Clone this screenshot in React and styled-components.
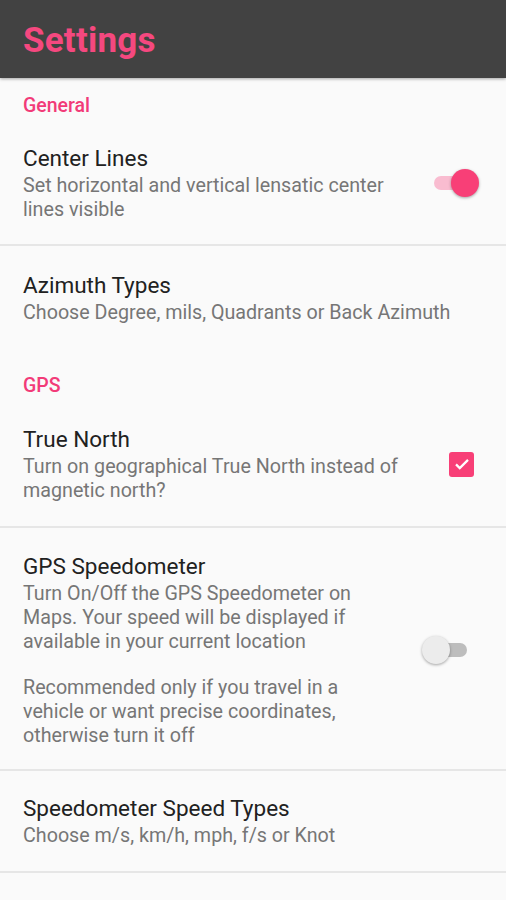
import React from "react";
import styled, { createGlobalStyle } from "styled-components";

const Global = createGlobalStyle`
  html, body { margin: 0; padding: 0; background: #fafafa; }
  body { font-family: Roboto, "Noto Sans", sans-serif; }
`;

const Page = styled.div`
  width: 506px;
  min-height: 900px;
  background: #fafafa;
  overflow: hidden;
`;

const AppBar = styled.header`
  height: 78px;
  box-sizing: border-box;
  padding: 3px 0 0 23px;
  background: #424242;
  display: flex;
  align-items: center;
  box-shadow: 0 1px 3px rgba(0, 0, 0, 0.35);
  position: relative;
  z-index: 1;
`;

const Title = styled.h1`
  margin: 0;
  color: #f5487f;
  font-size: 35px;
  font-weight: 700;
  letter-spacing: 0.2px;
`;

const Category = styled.div`
  color: #f23b78;
  font-size: 19.5px;
  line-height: 24px;
  font-weight: 500;
  padding: ${(p) => p.$pt} 23px 0;
`;

const Row = styled.div`
  display: flex;
  align-items: center;
  padding: ${(p) => p.$pt} 23px ${(p) => p.$pb};
  border-bottom: ${(p) => (p.$divider ? "2px solid #e6e6e6" : "none")};
`;

const Texts = styled.div`
  flex: 1;
  min-width: 0;
`;

const ItemTitle = styled.div`
  color: #212121;
  font-size: 22.5px;
  line-height: 28px;
  margin-bottom: 2px;
`;

const Summary = styled.div`
  color: #767676;
  font-size: 19.7px;
  line-height: 24px;
  max-width: ${(p) => p.$max || "none"};
  & + & {
    margin-top: 22px;
  }
`;

const Widget = styled.div`
  display: flex;
  justify-content: flex-end;
  flex-shrink: 0;
  padding-right: ${(p) => p.$pr};
`;

const SwitchTrack = styled.div`
  position: relative;
  width: 36px;
  height: 14px;
  border-radius: 7px;
  background: ${(p) => (p.$on ? "#f9bcd0" : "#bdbdbd")};
`;

const SwitchThumb = styled.div`
  position: absolute;
  top: -7px;
  left: ${(p) => (p.$on ? "17px" : "-9px")};
  width: 28px;
  height: 28px;
  border-radius: 50%;
  background: ${(p) => (p.$on ? "#f83f77" : "#ececec")};
  box-shadow: 0 1px 3px rgba(0, 0, 0, 0.35);
`;

const CheckBox = styled.div`
  width: 25px;
  height: 25px;
  border-radius: 3px;
  background: #f83f77;
  display: flex;
  align-items: center;
  justify-content: center;
`;

function Switch({ on }) {
  return (
    <SwitchTrack $on={on}>
      <SwitchThumb $on={on} />
    </SwitchTrack>
  );
}

export default function App() {
  return (
    <Page>
      <Global />
      <AppBar>
        <Title>Settings</Title>
      </AppBar>
      <Category $pt="16px">General</Category>
      <Row $divider $pt="26px" $pb="22px">
        <Texts>
          <ItemTitle>Center Lines</ItemTitle>
          <Summary $max="395px">
            Set horizontal and vertical lensatic center lines visible
          </Summary>
        </Texts>
        <Widget $pr="13px">
          <Switch on />
        </Widget>
      </Row>
      <Row $pt="25px" $pb="25px">
        <Texts>
          <ItemTitle>Azimuth Types</ItemTitle>
          <Summary>Choose Degree, mils, Quadrants or Back Azimuth</Summary>
        </Texts>
      </Row>
      <Category $pt="24px">GPS</Category>
      <Row $divider $pt="27px" $pb="23px">
        <Texts>
          <ItemTitle>True North</ItemTitle>
          <Summary $max="405px">
            Turn on geographical True North instead of magnetic north?
          </Summary>
        </Texts>
        <Widget $pr="9px">
          <CheckBox>
            <svg width="18" height="18" viewBox="0 0 24 24">
              <path
                d="M4 12.5l5 5L20 6.5"
                fill="none"
                stroke="#fff"
                strokeWidth="3"
              />
            </svg>
          </CheckBox>
        </Widget>
      </Row>
      <Row $divider $pt="24px" $pb="21px">
        <Texts>
          <ItemTitle>GPS Speedometer</ItemTitle>
          <Summary $max="362px">
            Turn On/Off the GPS Speedometer on Maps. Your speed will be
            displayed if available in your current location
          </Summary>
          <Summary $max="362px">
            Recommended only if you travel in a vehicle or want precise
            coordinates, otherwise turn it off
          </Summary>
        </Texts>
        <Widget $pr="16px">
          <Switch />
        </Widget>
      </Row>
      <Row $divider $pt="23px" $pb="23px">
        <Texts>
          <ItemTitle>Speedometer Speed Types</ItemTitle>
          <Summary>Choose m/s, km/h, mph, f/s or Knot</Summary>
        </Texts>
      </Row>
    </Page>
  );
}
